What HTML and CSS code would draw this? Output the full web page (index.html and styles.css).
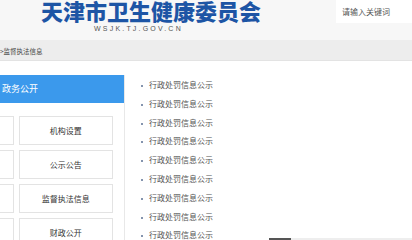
FILE: index.html
```html
<!DOCTYPE html>
<html lang="zh-CN">
<head>
    <meta charset="UTF-8">
    <meta name="viewport" content="width=device-width, initial-scale=1.0">
    <title>天津市卫生健康委员会</title>
    <link rel="stylesheet" href="styles.css">
</head>
<body>
    <!-- header -->
    <div class="header">
        <div class="site-name">
            <div class="site-title">天津市卫生健康委员会</div>
            <div class="site-url">WSJK.TJ.GOV.CN</div>
        </div>
        <div class="search-box">请输入关键词</div>
    </div>

    <!-- breadcrumb -->
    <div class="crumb">&gt;监督执法信息</div>

    <div class="main">
        <!-- left menu -->
        <div class="side">
            <div class="side-title">政务公开</div>
            <div class="side-grid">
                <div class="side-item">信息公开</div>
                <div class="side-item">机构设置</div>
                <div class="side-item">政策文件</div>
                <div class="side-item">公示公告</div>
                <div class="side-item">规划计划</div>
                <div class="side-item">监督执法信息</div>
                <div class="side-item">统计信息</div>
                <div class="side-item">财政公开</div>
            </div>
        </div>

        <!-- list -->
        <ul class="news-list">
            <li>行政处罚信息公示</li>
            <li>行政处罚信息公示</li>
            <li>行政处罚信息公示</li>
            <li>行政处罚信息公示</li>
            <li>行政处罚信息公示</li>
            <li>行政处罚信息公示</li>
            <li>行政处罚信息公示</li>
            <li>行政处罚信息公示</li>
            <li>行政处罚信息公示</li>
        </ul>

        <div class="pager-col">
            <div class="pager-line"><span class="pager-active"></span></div>
        </div>
    </div>
</body>
</html>
```

FILE: styles.css
```css
body {
    margin: 0;
    width: 412px;
    height: 240px;
    overflow: hidden;
    background: #fff;
    font-family: "Liberation Sans", "Noto Sans CJK SC", sans-serif;
    color: #333;
}

.header {
    display: flex;
    height: 40px;
    background: #f7f7f7;
}

.site-name {
    margin-left: 41px;
}

.site-title {
    margin-top: -1px;
    font-family: "Noto Sans CJK SC", sans-serif;
    font-size: 22px;
    font-weight: 900;
    line-height: 22px;
    color: #1d55a5;
}

.site-url {
    margin-left: 53px;
    margin-top: 4px;
    font-size: 7px;
    line-height: 8px;
    letter-spacing: 2.2px;
    color: #555;
}

.search-box {
    margin-left: auto;
    width: 70px;
    height: 23px;
    padding-left: 6px;
    background: #fff;
    font-family: "Noto Sans CJK SC", sans-serif;
    font-size: 8px;
    line-height: 23px;
    color: #555;
}

.crumb {
    height: 20px;
    background: #ededed;
    border-bottom: 1px solid #e3e3e3;
    font-family: "Noto Sans CJK SC", sans-serif;
    font-size: 6.5px;
    line-height: 22px;
    color: #444;
}

.main {
    display: flex;
    margin-left: -92px;
}

.side {
    width: 216px;
    flex-shrink: 0;
    margin-top: 14px;
    height: 200px;
    border-right: 1px solid #e8e8e8;
}

.side-title {
    height: 28px;
    padding-left: 94px;
    background: #3b99ec;
    font-family: "Noto Sans CJK SC", sans-serif;
    font-size: 9px;
    line-height: 28px;
    color: #fff;
}

.side-grid {
    display: grid;
    grid-template-columns: 1fr 1fr;
    gap: 5px;
    padding: 13px 11px 0 11px;
}

.side-item {
    height: 27px;
    border: 1px solid #e3e3e3;
    text-align: center;
    font-family: "Noto Sans CJK SC", sans-serif;
    font-size: 8px;
    line-height: 27px;
    color: #333;
}

.news-list {
    list-style: none;
    margin: 0;
    width: 125px;
    flex-shrink: 0;
    padding: 15px 0 0 16px;
    font-family: "Noto Sans CJK SC", sans-serif;
    font-size: 8px;
    line-height: 18.8px;
    color: #555;
}

.news-list li {
    position: relative;
    padding-left: 8px;
}

.news-list li::before {
    content: "";
    position: absolute;
    left: 0;
    top: 9px;
    width: 2px;
    height: 2px;
    background: #8494ae;
}

.pager-col {
    flex: 1;
    padding-top: 177px;
    padding-left: 3px;
}

.pager-line {
    width: 200px;
    height: 2px;
    background: #eee;
}

.pager-active {
    display: block;
    width: 22px;
    height: 2px;
    background: #555;
}
```
